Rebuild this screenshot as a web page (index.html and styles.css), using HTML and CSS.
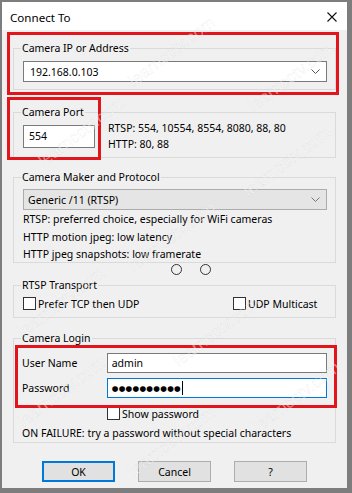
FILE: index.html
```html
<!DOCTYPE html>
<html>
<head>
<meta charset="utf-8">
<link rel="stylesheet" href="styles.css">
</head>
<body>
<div class="win">
  <div class="title">
    <span class="title-text">Connect To</span>
    <svg class="close" width="10" height="10" viewBox="0 0 10 10"><path d="M0.5 0.5 L9.5 9.5 M9.5 0.5 L0.5 9.5" stroke="#111" stroke-width="1.1" fill="none"/></svg>
  </div>
  <div class="content">
    <fieldset class="grp g1">
      <legend>Camera IP or Address</legend>
      <div class="combo"><span>192.168.0.103</span><svg class="chev" width="9" height="5" viewBox="0 0 9 5"><path d="M0.5 0.5 L4.5 4.5 L8.5 0.5" stroke="#555" fill="none"/></svg></div>
    </fieldset>

    <fieldset class="grp g2">
      <legend>Camera Port</legend>
      <div class="port-row">
        <div class="field port">554</div>
        <div class="hints">
          <div>RTSP: 554, 10554, 8554, 8080, 88, 80</div>
          <div>HTTP: 80, 88</div>
        </div>
      </div>
    </fieldset>

    <fieldset class="grp g3">
      <legend>Camera Maker and Protocol</legend>
      <div class="combo combo-ro"><span>Generic /11 (RTSP)</span><svg class="chev" width="9" height="5" viewBox="0 0 9 5"><path d="M0.5 0.5 L4.5 4.5 L8.5 0.5" stroke="#777" fill="none"/></svg></div>
      <div class="desc">RTSP: preferred choice, especially for WiFi cameras</div>
      <div class="desc">HTTP motion jpeg: low latency</div>
      <div class="desc last">HTTP jpeg snapshots: low framerate</div>
    </fieldset>

    <div class="dots"><span class="ring"></span><span class="ring"></span></div>

    <fieldset class="grp g4">
      <legend>RTSP Transport</legend>
      <div class="checks">
        <label class="chk tcp"><span class="box"></span>Prefer TCP then UDP</label>
        <label class="chk"><span class="box"></span>UDP Multicast</label>
      </div>
    </fieldset>

    <fieldset class="grp g5">
      <legend>Camera Login</legend>
      <div class="row">
        <span class="lbl">User Name</span>
        <div class="field wide">admin</div>
      </div>
      <div class="row row2">
        <span class="lbl">Password</span>
        <div class="field wide focus"><span class="pw">●●●●●●●●●●</span><span class="caret"></span></div>
      </div>
      <label class="chk showpw"><span class="box"></span>Show password</label>
      <div class="fail">ON FAILURE: try a password without special characters</div>
    </fieldset>

    <div class="buttons">
      <button class="btn default">OK</button>
      <button class="btn">Cancel</button>
      <button class="btn">?</button>
    </div>
  </div>

  <div class="hl hl1"></div>
  <div class="hl hl2"></div>
  <div class="hl hl3"></div>

  <span class="wm w1">learncctv.com</span>
  <span class="wm w2">learncctv.com</span>
  <span class="wm w3">learncctv.com</span>
  <span class="wm w4">learncctv.com</span>
  <span class="wm w5">learncctv.com</span>
  <span class="wm w6">learncctv.com</span>
  <span class="wm w7">learncctv.com</span>
  <span class="wm w8">learncctv.com</span>
  <span class="wm w9">learncctv.com</span>
  <span class="wm w10">learncctv.com</span>
</div>
</body>
</html>
```

FILE: styles.css
```css
html, body {
  margin: 0;
  padding: 0;
}
body {
  background: #7d7d7d;
  width: 352px;
  height: 493px;
  padding: 2px 0 0 2px;
  box-sizing: border-box;
  overflow: hidden;
  font-family: "Noto Sans", "Open Sans", sans-serif;
  font-size: 10.5px;
  color: #000;
}
.win {
  position: relative;
  width: 345px;
  height: 486px;
  background: #f0f0f0;
  overflow: hidden;
}
.title {
  height: 28px;
  background: #ffffff;
  display: flex;
  align-items: center;
  justify-content: space-between;
  padding: 2px 10px 0 8px;
  box-sizing: border-box;
}
.title-text {
  font-size: 11.6px;
}
.grp {
  box-sizing: border-box;
  width: 323px;
  margin: 0 0 0 11px;
  padding: 0 8px 0 9px;
  border: 1px solid #dadada;
  min-width: 0;
}
legend {
  padding: 0 1px;
  margin-left: -2px;
  line-height: 16px;
  font-size: 10.5px;
}
.g1 { margin-top: 10px; padding-top: 5px; padding-bottom: 7px; }
.g2 { margin-top: 14px; padding-bottom: 5px; }
.g3 { margin-top: 11px; padding-top: 4px; padding-bottom: 0; }
.g4 { margin-top: 2px; padding-top: 4px; padding-bottom: 7px; }
.g5 { margin-top: 12px; padding-top: 7px; padding-bottom: 1px; }

.combo {
  height: 21px;
  box-sizing: border-box;
  border: 1px solid #7a7a7a;
  background: #fff;
  display: flex;
  align-items: center;
  justify-content: space-between;
  padding: 0 6px 0 6px;
}
.combo-ro {
  background: #e5e5e5;
  border-color: #acacac;
  padding-left: 4px;
}
.field {
  box-sizing: border-box;
  border: 1px solid #7a7a7a;
  background: #fff;
  display: flex;
  align-items: center;
  padding-left: 5px;
}
.port-row {
  display: flex;
  align-items: center;
  gap: 13px;
}
.port {
  width: 72px;
  height: 23px;
}
.hints {
  line-height: 16px;
}
.desc {
  line-height: 18px;
}
.desc.last {
  line-height: 16px;
}
.dots {
  display: flex;
  gap: 18px;
  height: 11px;
  margin: 1px 0 0 169px;
}
.ring {
  width: 11px;
  height: 11px;
  box-sizing: border-box;
  border: 1.3px solid #333;
  border-radius: 50%;
}
.checks {
  display: flex;
}
.chk {
  display: flex;
  align-items: center;
  gap: 2px;
  height: 13px;
  white-space: nowrap;
}
.tcp {
  width: 210px;
}
.box {
  width: 13px;
  height: 13px;
  flex: none;
  box-sizing: border-box;
  border: 1px solid #333;
  background: #fff;
}
.row {
  display: flex;
  align-items: center;
  height: 20px;
}
.row2 {
  margin-top: 5px;
}
.lbl {
  width: 84px;
  margin-left: -1px;
  padding-right: 1px;
}
.wide {
  width: 221px;
  height: 20px;
  padding-left: 4px;
}
.focus {
  border-color: #0078d7;
}
.pw {
  font-size: 7.6px;
  letter-spacing: 0.3px;
  font-family: "DejaVu Sans", sans-serif;
}
.caret {
  width: 1px;
  height: 14px;
  background: #000;
  margin-left: 1px;
}
.showpw {
  margin: 9px 0 0 84px;
}
.fail {
  margin-top: 5px;
  line-height: 16px;
  margin-left: -1px;
  white-space: nowrap;
}
.buttons {
  display: flex;
  gap: 23px;
  margin: 18px 0 0 40px;
}
.btn {
  width: 73px;
  height: 21px;
  box-sizing: border-box;
  border: 1px solid #adadad;
  background: #e1e1e1;
  font-family: inherit;
  font-size: 10.5px;
  padding: 0;
  color: #000;
}
.btn.default {
  border: 2px solid #0078d7;
}
.hl {
  position: absolute;
  border: 3px solid #e2141c;
  box-sizing: border-box;
  pointer-events: none;
}
.hl1 { left: 5px; top: 30px; width: 332px; height: 63px; }
.hl2 { left: 5px; top: 95px; width: 94px; height: 63px; }
.hl3 { left: 13px; top: 343px; width: 322px; height: 63px; }

/* watermark overlay */
.wm {
  position: absolute;
  transform: translate(-50%, -50%) rotate(-37deg);
  font-family: "Liberation Sans", sans-serif;
  font-size: 17px;
  line-height: 20px;
  white-space: nowrap;
  color: rgba(255, 255, 255, 0.45);
  -webkit-text-stroke: 0.5px rgba(0, 0, 0, 0.09);
  pointer-events: none;
}
.w1 { left: 170px; top: 50px; }
.w2 { left: 290px; top: 75px; }
.w3 { left: 80px; top: 130px; }
.w4 { left: 285px; top: 160px; }
.w5 { left: 170px; top: 235px; }
.w6 { left: 60px; top: 300px; }
.w7 { left: 215px; top: 330px; }
.w8 { left: 60px; top: 390px; }
.w9 { left: 295px; top: 395px; }
.w10 { left: 170px; top: 440px; }
```
